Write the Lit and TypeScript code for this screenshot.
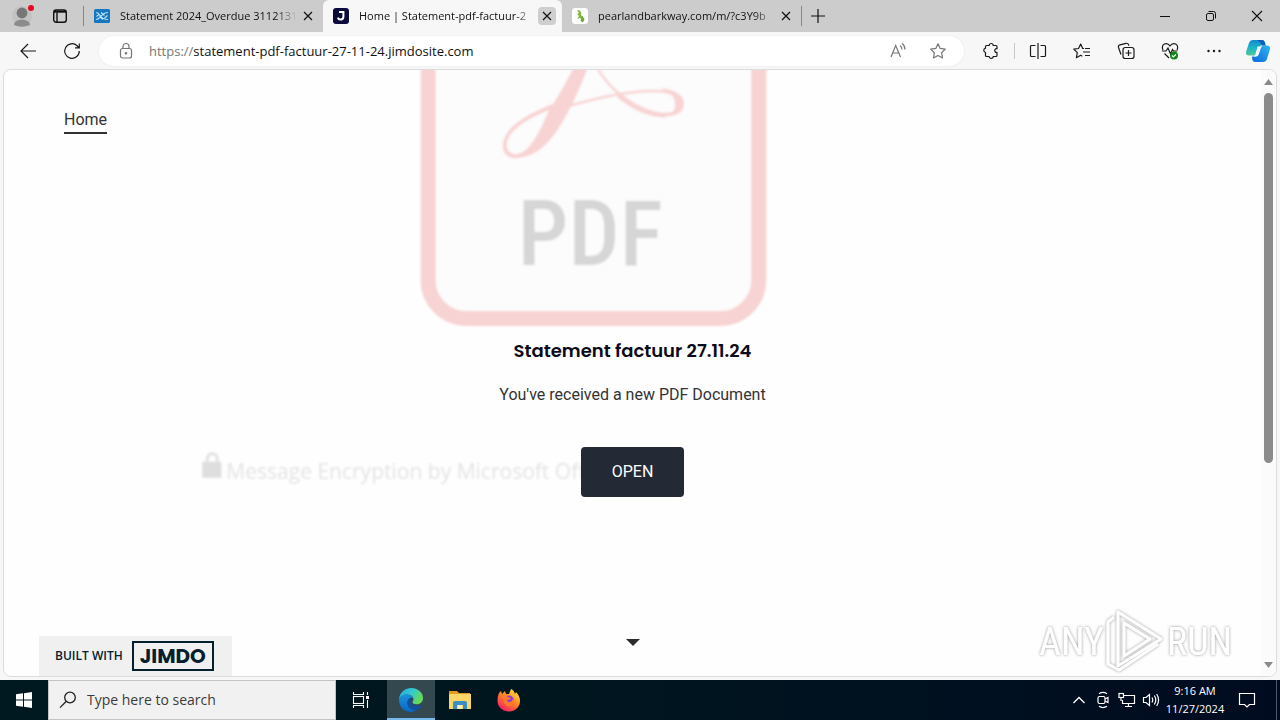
import { LitElement, html, css, svg } from "lit";
import { customElement } from "lit/decorators.js";

const closeGlyph = svg`<path d="M4 4l8 8M12 4l-8 8" stroke="#111" stroke-width="1.2" fill="none"/>`;

@customElement("tab-strip")
export class TabStrip extends LitElement {
  static styles = css`
    :host {
      display: flex;
      height: 32px;
      background: #cccccc;
      font: 11px/16px "Open Sans", "Noto Sans", sans-serif;
      color: #111;
    }
    button {
      border: 0;
      padding: 0;
      background: none;
      display: grid;
      place-items: center;
      flex: none;
    }
    svg { display: block; }
    .profile { width: 44px; }
    .actions { width: 32px; }
    .divider {
      width: 1px;
      height: 20px;
      margin: 6px 0;
      background: #7d8a94;
      flex: none;
    }
    .lead { margin-left: 7px; }
    .tab {
      display: flex;
      align-items: center;
      box-sizing: border-box;
      flex: 0 1 239px;
      min-width: 60px;
      padding: 0 6px 0 10px;
      gap: 10px;
    }
    .tab.active {
      background: #f7f7f7;
      border-radius: 6px 6px 0 0;
    }
    .name {
      flex: 1;
      min-width: 0;
      white-space: nowrap;
      overflow: hidden;
      mask-image: linear-gradient(to right, #000 88%, transparent);
    }
    .close {
      width: 18px;
      height: 18px;
      border-radius: 4px;
      margin-left: -8px;
    }
    .active .close { background: #cfcfcf; }
    .add { width: 32px; }
    .spacer { flex: 1; }
    .win { width: 46px; }
  `;

  render() {
    return html`
      <button class="profile" aria-label="Profile">
        <svg width="24" height="26" viewBox="0 0 24 26">
          <circle cx="12" cy="13" r="10" fill="#c2c2c2" />
          <circle cx="12" cy="10" r="5.4" fill="#777" />
          <path d="M4 22c0-7 16-7 16 0q-8 3.500-16 0z" fill="#8c8c8c" />
          <circle cx="21" cy="5" r="3" fill="#e00b1c" />
        </svg>
      </button>
      <button class="actions" aria-label="Tab actions">
        <svg width="16" height="16" viewBox="0 0 16 16" fill="none" stroke="#111" stroke-width="1.400">
          <rect x="1.700" y="2" width="12.600" height="12.300" rx="2.500" />
          <path d="M2 3.700h12" stroke-width="2" /><path d="M5 4.500v9.500" />
        </svg>
      </button>
      <span class="divider lead"></span>
      <div class="tab">
        <svg width="16" height="16" viewBox="0 0 16 16">
          <rect y="1" width="16" height="14" rx="1.500" fill="#1676c0" />
          <path d="M2 4.500c2 0 3 1.500 4.500 3.500S10 11.500 14 11.500M2 11.500c3 0 3.500-2 5-3.500s3-3.500 7-3.500M2.500 8.500l3-2.500M10.500 10l3-2.500M7 4.500l3.500 3M5.500 8.500l3.500 3" stroke="#b9e2fa" fill="none" stroke-width="1.100" />
        </svg>
        <span class="name">Statement 2024_Overdue 3112131</span>
        <button class="close" aria-label="Close tab"><svg width="16" height="16">${closeGlyph}</svg></button>
      </div>
      <div class="tab active">
        <svg width="16" height="16" viewBox="0 0 16 16">
          <rect width="16" height="16" rx="3" fill="#0a0b3a" />
          <path d="M6 3.900h4.400v5a2.900 2.900 0 0 1-5.600.8" stroke="#fff" stroke-width="2" fill="none" />
        </svg>
        <span class="name">Home | Statement-pdf-factuur-2</span>
        <button class="close" aria-label="Close tab"><svg width="16" height="16">${closeGlyph}</svg></button>
      </div>
      <div class="tab">
        <svg width="16" height="16" viewBox="0 0 16 16">
          <rect width="16" height="16" rx="3" fill="#fff" />
          <path d="M5 2c3 0 5 2 4 5l2 2-1 3-2-2-3 1 2-3-2-2 2-1z" fill="#84b83d" />
          <path d="M10 8l2.500 3-1.500 3.500-2.500-1.500z" fill="#6aa63b" />
        </svg>
        <span class="name">pearlandbarkway.com/m/?c3Y9b</span>
        <button class="close" aria-label="Close tab"><svg width="16" height="16">${closeGlyph}</svg></button>
      </div>
      <span class="divider"></span>
      <button class="add" aria-label="New tab">
        <svg width="16" height="16"><path d="M8 1v14M1 8h14" stroke="#111" stroke-width="1.200" /></svg>
      </button>
      <span class="spacer"></span>
      <button class="win" aria-label="Minimize">
        <svg width="12" height="12"><path d="M1 6.500h10" stroke="#111" /></svg>
      </button>
      <button class="win" aria-label="Restore">
        <svg width="12" height="12" fill="none" stroke="#111">
          <rect x="1.500" y="3.500" width="7" height="7" rx="1.500" />
          <path d="M3.500 1.500h5a2 2 0 0 1 2 2v5" />
        </svg>
      </button>
      <button class="win" aria-label="Close">
        <svg width="12" height="12"><path d="M1 1l10 10M11 1L1 11" stroke="#111" stroke-width="1.100" /></svg>
      </button>
    `;
  }
}

@customElement("tool-bar")
export class ToolBar extends LitElement {
  static styles = css`
    :host {
      display: flex;
      align-items: center;
      height: 37px;
      padding: 0 0 0 6px;
      background: #f7f7f7;
      font: 13px/18px "Open Sans", "Noto Sans", sans-serif;
    }
    button {
      border: 0;
      padding: 0;
      background: none;
      display: grid;
      place-items: center;
      flex: none;
      width: 44px;
      height: 30px;
    }
    svg { display: block; fill: none; stroke: #1a1a1a; stroke-width: 1.2; }
    .box {
      flex: 1;
      display: flex;
      align-items: center;
      height: 30px;
      margin: 0 5px;
      border-radius: 15px;
      background: #fff;
      box-shadow: 0 0 2px #e2e2e2;
      padding: 0 6px 0 19px;
      min-width: 0;
    }
    .box svg { stroke: #767676; flex: none; }
    .scheme { color: #767676; padding-left: 15px; }
    input {
      flex: 1;
      min-width: 0;
      border: 0;
      padding: 0;
      outline: 0;
      background: none;
      font: inherit;
      color: #111;
    }
    .box button { width: 40px; }
    .divider { width: 1px; height: 16px; margin: 0 1px; background: #c8c8c8; }
    .logo svg { stroke: none; }
  `;

  render() {
    return html`
      <button aria-label="Back">
        <svg width="18" height="16"><path d="M9 1L2 8l7 7M2 8h15" /></svg>
      </button>
      <button aria-label="Refresh">
        <svg width="18" height="18"><path d="M16.300 9a7.300 7.300 0 1 1-2.200-5.200L16 5.600M16.300 1.500v4.300h-4.300" /></svg>
      </button>
      <div class="box">
        <svg width="16" height="18">
          <rect x="2.500" y="6.500" width="11" height="9.500" rx="2" />
          <path d="M5 6.500v-2a3 3 0 0 1 6 0v2" />
          <circle cx="8" cy="11.300" r=".7" fill="#767676" />
        </svg>
        <label class="scheme" for="address">https://</label>
        <input id="address" type="text" value="statement-pdf-factuur-27-11-24.jimdosite.com" />
        <button aria-label="Read aloud">
          <svg width="18" height="18">
            <path d="M2 15L6.700 3.500 11.500 15M3.700 11h6M11 3.500q2 1.500 2 4M13 1.500q3 2 3 6" />
          </svg>
        </button>
        <button aria-label="Add to favorites">
          <svg width="18" height="18">
            <path d="M9 1.700l2.200 4.700 5.100.7-3.700 3.600.9 5.200L9 13.400l-4.500 2.500.9-5.200L1.700 7.100l5.100-.7z" stroke-linejoin="round" />
          </svg>
        </button>
      </div>
      <button aria-label="Extensions">
        <svg width="18" height="18">
          <path d="M4.500 3.500h2.700a2 2 0 0 1 4 0h2.800q1 0 1 1v2.300c-3-.9-3 4.300 0 3.500v3.200q0 1-1 1h-2.800c0 2.500-4 2.500-4 0H4.500q-1 0-1-1v-3a2.200 2.200 0 0 1 0-4.300V4.500q0-1 1-1z" stroke-linejoin="round" />
        </svg>
      </button>
      <span class="divider"></span>
      <button aria-label="Split screen">
        <svg width="18" height="18">
          <path d="M6.500 3.500h-4a1 1 0 0 0-1 1v9a1 1 0 0 0 1 1h4M11.500 3.500h4a1 1 0 0 1 1 1v9a1 1 0 0 1-1 1h-4M9 1v16" />
        </svg>
      </button>
      <button aria-label="Favorites">
        <svg width="18" height="18">
          <path d="M11 6.500H9.700L7.700 2 5.500 6.500.8 7.200l3.500 3.500-.9 5 4.300-2.400 1.600.9M12 6.500h5M10 10h7M12 13.500h5" stroke-linejoin="round" />
        </svg>
      </button>
      <button aria-label="Collections">
        <svg width="18" height="18">
          <rect x="6" y="5.500" width="11" height="11" rx="2.300" />
          <path d="M11.500 8v6M8.500 11h6M4 12.500l-2.500-7Q1 3.500 3 2.800l6-1.500q2-.3 2.600 1.500l.4 1" />
        </svg>
      </button>
      <button aria-label="Browser essentials">
        <svg width="18" height="18">
          <path d="M2 8C-.5 2 6-.5 9 4c3-4.500 9.500-2 7 4M1 9h4l2-3 2.500 6 2-4.500 1 1.500h4M3.500 11.500L8 16" />
          <circle cx="13" cy="13.500" r="4" fill="#13831b" stroke="none" />
          <path d="M11 13.500l1.400 1.400 2.600-2.600" stroke="#fff" />
        </svg>
      </button>
      <button aria-label="Settings and more">
        <svg width="18" height="18">
          <g fill="#1a1a1a" stroke="none"><circle cx="3.500" cy="9" r="1.200" /><circle cx="9" cy="9" r="1.200" /><circle cx="14.500" cy="9" r="1.200" /></g>
        </svg>
      </button>
      <button class="logo" aria-label="Copilot">
        <svg width="26" height="26" viewBox="0 0 26 26">
          <defs>
            <linearGradient id="ca" x1="0" y1="0" x2="0" y2="1"><stop offset="0" stop-color="#1488d4" /><stop offset=".5" stop-color="#1cb5c5" /><stop offset="1" stop-color="#55c89a" /></linearGradient>
            <linearGradient id="cb" x1="1" y1="0" x2="0" y2="1"><stop offset="0" stop-color="#33b5ee" /><stop offset="1" stop-color="#0868df" /></linearGradient>
          </defs>
          <path d="M8 2h9q2 0 2.700 2l.8 3h-3q-2 0-2.600 2l-2 6q-.8 2.500-3 2.500H4q-3.500 0-3-3.500L4 5q1-3 4-3z" fill="url(#ca)" />
          <path d="M18 24H10q-2 0-2.600-2L7 18.500h3q2.200 0 3-2.500l2-6q.7-2.500 3-2.500h4q3.500 0 3 3.500l-3 10q-1 3-4 3z" fill="url(#cb)" />
          <path d="M12.500 8.500h5q-1.300.5-1.800 2l-2 6q-.6 2-2.500 2H8.500q1.300-.5 1.800-2l1.600-5.500q.6-2 .6-2.500z" fill="#f2fbff" />
          <path d="M12 2h5q2 0 2.700 2l1 3.500h-3.500q-1.500-1-2-3z" fill="#0d61bc" />
        </svg>
      </button>
    `;
  }
}

@customElement("site-page")
export class SitePage extends LitElement {
  static styles = css`
    :host {
      display: flex;
      flex: 1;
      min-height: 0;
      margin: 0 3px 3px;
      border: 1px solid #dcdcdc;
      border-radius: 8px;
      background: #fefefe;
      overflow: hidden;
      position: relative;
      font: 16px/24px Roboto, sans-serif;
      color: #333;
    }
    .content {
      flex: 1;
      min-width: 0;
      display: flex;
      flex-direction: column;
      position: relative;
    }
    .backdrop {
      position: absolute;
      inset: 0;
      width: 100%;
      height: 100%;
    }
    .letters { font: 500 90px "Roboto Condensed", Roboto, sans-serif; }
    .notice { font: 21px "Open Sans", "Noto Sans", sans-serif; }
    nav {
      position: relative;
      padding: 38px 60px 0;
      display: flex;
    }
    nav a {
      color: inherit;
      text-decoration: none;
      border-bottom: 2px solid #333;
    }
    main {
      position: relative;
      flex: 1;
      padding-top: 204px;
      display: flex;
      flex-direction: column;
      align-items: center;
      text-align: center;
    }
    h1 {
      margin: 0 0 19px;
      font: 600 18px/26px Poppins, Inter, sans-serif;
      color: #0b0b1a;
    }
    p { margin: 0 0 40px; }
    .open {
      display: block;
      padding: 13px 31px;
      border-radius: 4px;
      background: #242a35;
      color: #fff;
      text-decoration: none;
    }
    .more {
      border: 0;
      padding: 0;
      background: none;
      margin: auto 0 29px;
    }
    .more svg { display: block; }
    .badge {
      position: absolute;
      left: 35px;
      bottom: 0;
      display: flex;
      align-items: center;
      gap: 9px;
      height: 40px;
      padding: 0 18px 0 16px;
      background: #f0f0f0;
      color: #04202c;
      text-decoration: none;
      font: 600 12px/16px "Open Sans", "Noto Sans", sans-serif;
    }
    .brand {
      border: 2px solid #04202c;
      padding: 0 6px;
      font: 700 20px/26px Poppins, Inter, sans-serif;
    }
    .bar {
      width: 15px;
      display: flex;
      flex-direction: column;
      align-items: center;
      padding: 9px 0 8px;
      box-sizing: border-box;
      background: #fbfbfb;
      gap: 8px;
    }
    .track { flex: 1; }
    .thumb {
      width: 9px;
      height: 66%;
      border-radius: 5px;
      background: #8b8b8b;
    }
    .mark {
      position: absolute;
      right: 41px;
      bottom: 2px;
    }
    .word { font: 400 38px "Roboto Condensed", Roboto, sans-serif; }
  `;

  render() {
    return html`
      <div class="content">
        <svg class="backdrop" viewBox="0 0 1257 605" preserveAspectRatio="xMidYMin slice" aria-hidden="true">
          <defs><filter id="soft"><feGaussianBlur stdDeviation="0.9" /></filter></defs>
          <g filter="url(#soft)">
            <rect x="424.500" y="-120" width="330" height="368" rx="38" fill="#fcfcfc" stroke="#f8d3d3" stroke-width="15" />
            <path d="M570-3h14c-8 22-18 44-31 64-13 19-27 27-42 27-7 0-12-5-12-12 0-18 24-32 50-42 9-13 14-24 21-37zM545 40c-22 9-42 21-42 35 0 5 3 9 9 9 13 0 24-22 33-44z" fill="#f8d3d3" />
            <g fill="none" stroke="#f8d3d3">
              <path d="M592-4c6 10 13 19 22 27 16 13 34 21 48 21 12 0 14-5 14-10 0-9-11-13-27-13-30 0-64 9-98 19" stroke-width="2.500" />
              <path d="M614 26c17 14 32 20 48 20" stroke-width="3" />
            </g>
            <path d="M655 18c16 1 25 7 25 16 0 8-8 13-20 12 8-2 11-5 11-12 0-8-6-12-16-16z" fill="#f8d3d3" />
            <text class="letters" x="514" y="195" fill="#d6d6d6">PDF</text>
            <path d="M204 391v-3a5 5 0 0 1 10 0v3" stroke-width="3" fill="none" stroke="#e2e2e2" />
            <rect x="199" y="391" width="19" height="16" rx="1" fill="#dedede" />
            <text class="notice" x="223" y="408" fill="#e4e4e4">Message Encryption by Microsoft Off</text>
          </g>
        </svg>
        <nav><a href="#home">Home</a></nav>
        <main>
          <h1>Statement factuur 27.11.24</h1>
          <p>You've received a new PDF Document</p>
          <a class="open" href="#open">OPEN</a>
          <button class="more" aria-label="Scroll down">
            <svg width="14" height="8"><path d="M0 0h14L7 7z" fill="#2b2b2b" /></svg>
          </button>
        </main>
        <a class="badge" href="#jimdo">BUILT WITH <span class="brand">JIMDO</span></a>
      </div>
      <div class="bar">
        <svg width="9" height="6"><path d="M0 6h9L4.500 0z" fill="#8b8b8b" /></svg>
        <div class="track"><div class="thumb"></div></div>
        <svg width="9" height="6"><path d="M0 0h9L4.500 6z" fill="#8b8b8b" /></svg>
      </div>
      <svg class="mark" width="202" height="66" viewBox="0 0 202 66" role="img" aria-label="ANY RUN">
        <defs><filter id="glow" x="-10%" y="-20%" width="120%" height="140%"><feDropShadow dx="0" dy="0" stdDeviation="1.500" flood-color="#777" flood-opacity=".8" /></filter></defs>
        <g filter="url(#glow)" fill="none" stroke="#fff" stroke-width="3" stroke-linejoin="round">
          <g class="word" fill="#fff" stroke="none"><text x="6" y="47">ANY</text><text x="134" y="47">RUN</text></g>
          <path d="M85 4l43 27-43 27z" />
          <path d="M91 15l26 16-26 17z" />
          <path d="M81 9l-6 5v42l11 6 39-26" />
        </g>
      </svg>
    `;
  }
}

@customElement("task-bar")
export class TaskBar extends LitElement {
  static styles = css`
    :host {
      display: flex;
      height: 40px;
      background: linear-gradient(90deg, #001820, #00161f 45%, #000b20);
      color: #fff;
      font: 11px/18px "Open Sans", "Noto Sans", sans-serif;
    }
    button {
      border: 0;
      padding: 0;
      background: none;
      color: inherit;
      font: inherit;
      display: grid;
      place-items: center;
      width: 48px;
      height: 40px;
      flex: none;
    }
    svg { display: block; }
    .search {
      display: flex;
      align-items: center;
      box-sizing: border-box;
      flex: 0 1 288px;
      min-width: 120px;
      border: 1px solid #c4c4c4;
      background: #f1f1f1;
      padding: 0 10px;
      gap: 10px;
    }
    .search svg { flex: none; }
    input {
      flex: 1;
      min-width: 0;
      border: 0;
      padding: 0;
      outline: 0;
      background: none;
      font: 14px/20px "Open Sans", "Noto Sans", sans-serif;
    }
    input::placeholder { color: #3c3c3c; opacity: 1; }
    .apps { display: flex; gap: 1px; }
    .wide { width: 50px; }
    .current { background: #344850; box-shadow: inset 0 -2px #76b9ed; }
    .spacer { flex: 1; }
    .tray { width: 24px; }
    .clock { width: 64px; text-align: center; display: block; }
    .clock span { display: block; }
    .notes { width: 40px; }
    .peek { width: 4px; border-left: 1px solid #4f5866; box-sizing: border-box; margin-left: 9px; }
  `;

  render() {
    return html`
      <button aria-label="Start">
        <svg width="16" height="16" fill="#fff"><path d="M0 2.300L7 1.300V7.600H0zM8 1.200L16 0v7.600H8zM0 8.500h7v6.300l-7-1zM8 8.500h8V16l-8-1.200z" /></svg>
      </button>
      <div class="search">
        <svg width="18" height="18" fill="none" stroke="#222" stroke-width="1.300"><circle cx="11" cy="6.500" r="5.300" /><path d="M7.300 10.300L1 16.600" /></svg>
        <input type="search" placeholder="Type here to search" aria-label="Type here to search" />
      </div>
      <div class="apps">
        <button class="wide" aria-label="Task view">
          <svg width="18" height="18" fill="none" stroke="#fff" stroke-width="1.100">
            <path d="M1.500 1v2.500h10V1M1.500 17v-2.500h10V17" /><rect x="1.500" y="5.500" width="10" height="7" /><path d="M15.500 1v3M15.500 9v8" /><path d="M14 5h3v3h-3z" fill="#fff" stroke="none" />
          </svg>
        </button>
        <button class="current" aria-label="Microsoft Edge">
          <svg width="24" height="24" viewBox="0 0 24 24">
            <defs>
              <linearGradient id="ea" x1="0" y1="0" x2="1" y2=".4"><stop offset="0" stop-color="#25a5df" /><stop offset=".55" stop-color="#35c9cf" /><stop offset="1" stop-color="#65d95b" /></linearGradient>
              <linearGradient id="eb" x1="0" y1="0" x2="0" y2="1"><stop offset="0" stop-color="#1b93dd" /><stop offset="1" stop-color="#0a66c2" /></linearGradient>
            </defs>
            <path d="M0 12C0 5 5.500 0 12 0c7 0 12 4.500 12 10 0 4-3 6.300-6.500 6.300-3 0-4.500-1.300-4-2.300 3-4-1-7.500-5.500-7.500C4 6.500.5 9 0 12z" fill="url(#ea)" />
            <path d="M0 12C.5 8.500 4 6.500 8 6.500c3 0 5.500 1.500 6.200 3.500C11 9 8 12 8.500 15.500 9 20 13 22.500 17.500 21.500 16 23 14 24 12 24 5 24 0 18.500 0 12z" fill="url(#eb)" />
            <path d="M8.500 15C8 12 10 9.700 12.500 9.500c-1.500 2-1 5.500 1.500 7.200 2.500 1.600 6 1.300 8 .3 1 0 1 .7.500 1.400C18 24.500 9 22.500 8.500 15z" fill="#124f9c" />
          </svg>
        </button>
        <button aria-label="File Explorer">
          <svg width="22" height="20" viewBox="0 0 22 20">
            <path d="M0 1h8l2 2h11v6H0z" fill="#e49b20" /><path d="M0 4h22v15H0z" fill="#fbd668" />
            <path d="M4 19v-6q0-2 2-2h10q2 0 2 2v6h-4v-4H8v4z" fill="#3a8fc5" /><path d="M9 15h4v4H9z" fill="#fff1b8" />
          </svg>
        </button>
        <button aria-label="Firefox">
          <svg width="24" height="24" viewBox="0 0 24 24">
            <defs><linearGradient id="fa" x1=".9" y1="0" x2=".2" y2="1"><stop offset="0" stop-color="#fff14a" /><stop offset=".45" stop-color="#ff8a1e" /><stop offset="1" stop-color="#f5156c" /></linearGradient></defs>
            <path d="M2 5l2-2 1 3 3-3 1 3 3 0 2-5q3 1 4 5l1-2q4 4 4 9c0 6-5 10.500-11 10.500S.5 19 .5 13Q.500 8 2 5z" fill="url(#fa)" />
            <circle cx="12" cy="12.500" r="5" fill="#8a3ce0" />
            <path d="M5 8q3-2 6 1l3 1q-1 2-4 2 0 2 3 2 3-1 3-4 3 5-1 7.500-6 2.500-8-3z" fill="#ff7a2a" />
          </svg>
        </button>
      </div>
      <span class="spacer"></span>
      <button class="tray" aria-label="Show hidden icons">
        <svg width="14" height="14" fill="none" stroke="#fff" stroke-width="1.300"><path d="M1.500 10L7 4.500l5.500 5.500" /></svg>
      </button>
      <button class="tray" aria-label="Meet now">
        <svg width="16" height="18" fill="none" stroke="#fff" stroke-width="1.200"><rect x="3" y="5.500" width="7" height="7" rx="1.500" /><path d="M10 8l3-1.500v5L10 10M4 2.700q4-2.500 8 0M4 15.300q4 2.500 8 0" /></svg>
      </button>
      <button class="tray" aria-label="Network">
        <svg width="18" height="16" fill="none" stroke="#fff" stroke-width="1.200"><path d="M6 3.500h10.500v8h-12V8M10.500 11.500v3M7 14.500h7" /><rect x="1" y="1.500" width="4.500" height="4" /><path d="M3 6v3" /></svg>
      </button>
      <button class="tray" aria-label="Volume">
        <svg width="18" height="16" fill="none" stroke="#fff" stroke-width="1.200"><path d="M1.500 5.500h2.500L7.500 2.500v11L4 10.500H1.500zM10 5.500q1.500 2.500 0 5M12.300 3.500q3 4.500 0 9M14.600 2q4 6 0 12" /></svg>
      </button>
      <button class="clock"><span>9:16 AM</span><span>11/27/2024</span></button>
      <button class="notes" aria-label="Notifications">
        <svg width="18" height="18" fill="none" stroke="#fff" stroke-width="1.200"><path d="M1.500 2.500h15v11h-5L9 16l-2.500-2.500h-5z" /></svg>
      </button>
      <span class="peek"></span>
    `;
  }
}

@customElement("app-root")
export class AppRoot extends LitElement {
  static styles = css`
    :host {
      display: flex;
      flex-direction: column;
      height: 100vh;
      background: #f7f7f7;
      overflow: hidden;
    }
  `;

  render() {
    return html`<tab-strip></tab-strip><tool-bar></tool-bar><site-page></site-page><task-bar></task-bar>`;
  }
}
